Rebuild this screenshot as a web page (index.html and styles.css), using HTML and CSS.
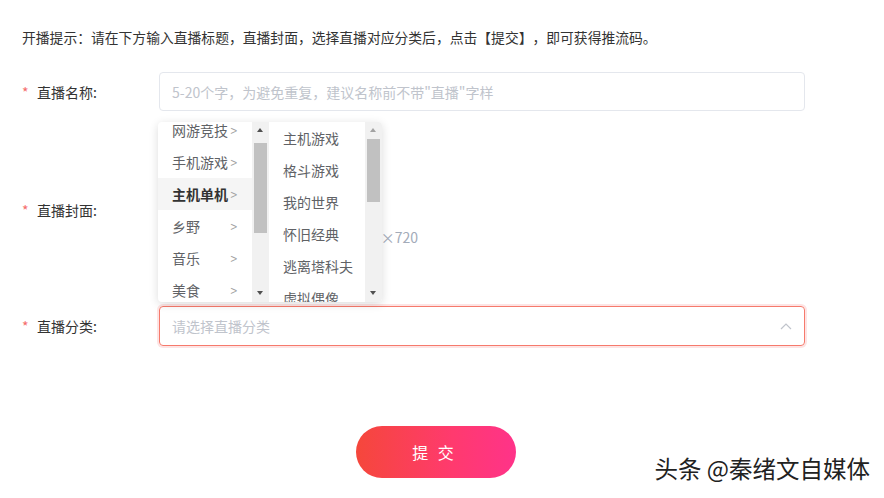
FILE: index.html
```html
<!DOCTYPE html>
<html lang="zh-CN">
<head>
<meta charset="utf-8">
<title>开播</title>
<link rel="stylesheet" href="styles.css">
</head>
<body>
<div class="page">
  <p class="hint">开播提示：请在下方输入直播标题，直播封面，选择直播对应分类后，点击【提交】，即可获得推流码。</p>

  <div class="row row-name">
    <label class="label"><span class="star">*</span>直播名称:</label>
    <div class="field">
      <div class="input"><span class="ph">5-20个字，为避免重复，建议名称前不带"直播"字样</span></div>
    </div>
  </div>

  <div class="row row-cover">
    <label class="label"><span class="star">*</span>直播封面:</label>
    <div class="field cover">
      <div class="cover-tip">建议尺寸：1280×720</div>
    </div>
  </div>

  <div class="row row-cat">
    <label class="label"><span class="star">*</span>直播分类:</label>
    <div class="field select-wrap">
      <div class="input select"><span class="ph">请选择直播分类</span>
        <svg class="chev" width="12" height="8" viewBox="0 0 12 8"><path d="M1 7 L6 2 L11 7" fill="none" stroke="#c0c4cc" stroke-width="1.2"/></svg>
      </div>
      <div class="dropdown">
        <div class="col col-left">
          <ul class="list list-scrolled">
            <li>网游竞技<span class="gt">&gt;</span></li>
            <li>手机游戏<span class="gt">&gt;</span></li>
            <li class="active">主机单机<span class="gt">&gt;</span></li>
            <li>乡野<span class="gt">&gt;</span></li>
            <li>音乐<span class="gt">&gt;</span></li>
            <li>美食<span class="gt">&gt;</span></li>
          </ul>
          <div class="sbar">
            <span class="tri up"></span>
            <span class="thumb thumb-left"></span>
            <span class="tri down"></span>
          </div>
        </div>
        <div class="col col-right">
          <ul class="list list-sub">
            <li>主机游戏</li>
            <li>格斗游戏</li>
            <li>我的世界</li>
            <li>怀旧经典</li>
            <li>逃离塔科夫</li>
            <li>虚拟偶像</li>
          </ul>
          <div class="sbar">
            <span class="tri up dim"></span>
            <span class="thumb thumb-right"></span>
            <span class="tri down"></span>
          </div>
        </div>
      </div>
    </div>
  </div>

  <div class="actions">
    <button class="submit">提 交</button>
  </div>

  <div class="watermark">头条 @秦绪文自媒体</div>
</div>
</body>
</html>
```

FILE: styles.css
```css
* { box-sizing: border-box; }
html, body { margin: 0; padding: 0; background: #fff; }
body {
  font-family: "Noto Sans CJK SC", "Noto Sans", sans-serif;
  color: #333;
  width: 884px;
  height: 498px;
  overflow: hidden;
  text-spacing-trim: space-all;
}
.page {
  position: relative;
  height: 498px;
  padding: 27px 0 0 22px;
}
.hint {
  margin: 0;
  font-size: 13.8px;
  line-height: 20px;
  color: #333;
  white-space: nowrap;
}
.row {
  display: flex;
  align-items: center;
}
.label {
  width: 137px;
  flex: none;
  font-size: 14px;
  color: #333;
  display: flex;
  align-items: center;
}
.star {
  color: #f56c6c;
  width: 15px;
  font-size: 14px;
}
.field { width: 646px; position: relative; }
.row-name { margin-top: 25px; height: 39px; }
.input {
  height: 39px;
  border: 1px solid #e4e7ed;
  border-radius: 4px;
  display: flex;
  align-items: center;
  padding: 0 12px;
  font-size: 14px;
}
.ph { color: #c0c4cc; }
.row-cover { margin-top: 22px; height: 153px; }
.cover { height: 153px; padding-top: 94px; }
.cover-tip {
  width: 259px;
  text-align: right;
  font-size: 14px;
  line-height: 20px;
  color: #a3abb9;
}
.row-cat { margin-top: 20px; height: 40px; }
.select {
  height: 40px;
  border-color: #f67a6c;
  box-shadow: 0 0 0 2px rgba(245, 108, 108, 0.18);
  justify-content: space-between;
}
.dropdown {
  position: absolute;
  left: -1px;
  bottom: calc(100% + 4px);
  width: 224px;
  height: 180px;
  background: #fff;
  border-radius: 4px;
  box-shadow: 0 2px 10px rgba(0, 0, 0, 0.14);
  display: flex;
  overflow: hidden;
}
.col { display: flex; height: 180px; overflow: hidden; }
.col-left { width: 111px; }
.col-right { width: 113px; }
.list {
  list-style: none;
  margin: 0;
  padding: 0;
  flex: none;
}
.col-left .list { width: 94px; }
.col-right .list { width: 96px; }
.list-scrolled { margin-top: -8px; }
.list li {
  height: 32px;
  line-height: 32px;
  font-size: 14px;
  color: #606266;
  position: relative;
  padding-left: 14px;
}
.list li.active { background: #f5f5f5; color: #333; font-weight: bold; }
.gt {
  position: absolute;
  left: 72px;
  top: 0;
  font-weight: normal;
  color: #a0a0a0;
  font-size: 14px;
  transform: scaleX(0.85);
}
.sbar {
  width: 17px;
  flex: none;
  height: 180px;
  background: #f1f1f1;
  position: relative;
}
.thumb {
  position: absolute;
  left: 2px;
  width: 13px;
  background: #c1c1c1;
}
.thumb-left { top: 21px; height: 90px; }
.thumb-right { top: 17px; height: 63px; }
.tri {
  position: absolute;
  left: 5px;
  width: 0;
  height: 0;
  border-left: 3.5px solid transparent;
  border-right: 3.5px solid transparent;
}
.tri.up { top: 6px; border-bottom: 4px solid #505050; }
.tri.up.dim { border-bottom-color: #a3a3a3; }
.tri.down { bottom: 7px; border-top: 4px solid #505050; }
.actions { margin-top: 80px; padding-left: 334px; }
.submit {
  width: 160px;
  height: 52px;
  border: none;
  border-radius: 26px;
  background: linear-gradient(90deg, #f5473b 0%, #ff3a6e 60%, #ff3389 100%);
  color: #fff;
  font-family: "Noto Sans CJK SC", sans-serif;
  font-size: 16px;
  letter-spacing: 3px;
  padding-left: 3px;
  cursor: pointer;
}
.watermark {
  position: absolute;
  right: 14px;
  bottom: 16px;
  font-size: 23.5px;
  line-height: 28px;
  color: #222;
  white-space: nowrap;
  text-shadow: 1px 1px 0 #fff, -1px -1px 0 #fff, 1px -1px 0 #fff, -1px 1px 0 #fff;
}
```
